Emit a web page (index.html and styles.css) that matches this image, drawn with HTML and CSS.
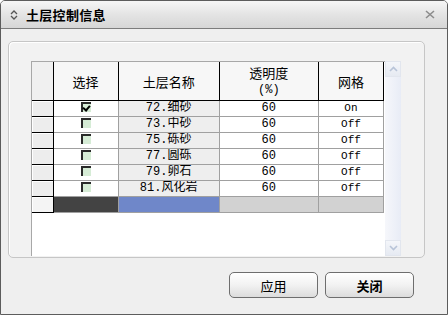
FILE: index.html
```html
<!DOCTYPE html>
<html>
<head>
<meta charset="utf-8">
<link rel="stylesheet" href="styles.css">
</head>
<body>
<div class="window">
  <div class="titlebar">
    <svg class="ticon" width="8" height="10" viewBox="0 0 8 10"><path d="M1 4 L4 1 L7 4 M1 6 L4 9 L7 6" fill="none" stroke="#555" stroke-width="1.3"/></svg>
    <span class="title">土层控制信息</span>
    <svg class="close" width="10" height="9" viewBox="0 0 10 9"><path d="M1 1 L9 8 M9 1 L1 8" stroke="#8c8c8c" stroke-width="1.6"/></svg>
  </div>
  <div class="content">
    <div class="group">
      <div class="gridwrap">
        <div class="gridarea">
          <table class="grid">
            <colgroup><col class="c0"><col class="c1"><col class="c2"><col class="c3"><col class="c4"></colgroup>
            <thead>
              <tr><th class="corner"></th><th>选择</th><th>土层名称</th><th>透明度<br><span class="pct">(%)</span></th><th>网格</th></tr>
            </thead>
            <tbody>
              <tr><td class="rh"></td><td class="cb"><span class="chk on"></span></td><td class="ro">72.细砂</td><td>60</td><td class="mono">On</td></tr>
              <tr><td class="rh"></td><td class="cb"><span class="chk"></span></td><td class="ro">73.中砂</td><td>60</td><td class="mono">Off</td></tr>
              <tr><td class="rh"></td><td class="cb"><span class="chk"></span></td><td class="ro">75.砾砂</td><td>60</td><td class="mono">Off</td></tr>
              <tr><td class="rh"></td><td class="cb"><span class="chk"></span></td><td class="ro">77.圆砾</td><td>60</td><td class="mono">Off</td></tr>
              <tr><td class="rh"></td><td class="cb"><span class="chk"></span></td><td class="ro">79.卵石</td><td>60</td><td class="mono">Off</td></tr>
              <tr><td class="rh"></td><td class="cb"><span class="chk"></span></td><td class="ro">81.风化岩</td><td>60</td><td class="mono">Off</td></tr>
              <tr class="newrow"><td class="rh"></td><td class="n1"></td><td class="n2"></td><td class="n3"></td><td class="n3"></td></tr>
            </tbody>
          </table>
        </div>
        <div class="scrollbar">
          <div class="sbtn"><svg width="9" height="6" viewBox="0 0 9 6"><path d="M1 5 L4.5 1.5 L8 5" fill="none" stroke="#b8c4d8" stroke-width="1.6"/></svg></div>
          <div class="strack"></div>
          <div class="sbtn"><svg width="9" height="6" viewBox="0 0 9 6"><path d="M1 1 L4.5 4.5 L8 1" fill="none" stroke="#b8c4d8" stroke-width="1.6"/></svg></div>
        </div>
      </div>
    </div>
    <div class="buttons">
      <button class="btn">应用</button>
      <button class="btn bold">关闭</button>
    </div>
  </div>
</div>
</body>
</html>
```
FILE: styles.css
```css
html, body {
  margin: 0;
  padding: 0;
  background: #ffffff;
}
body {
  font-family: "Noto Sans CJK SC", "Liberation Sans", sans-serif;
  color: #000;
}
.window {
  width: 448px;
  height: 315px;
  box-sizing: border-box;
  border: 1px solid #5c5c5c;
  border-radius: 5px 5px 0 0;
  background: #efefef;
  display: flex;
  flex-direction: column;
  overflow: hidden;
}
.titlebar {
  height: 27px;
  flex: none;
  border-bottom: 1px solid #7c7c7c;
  background: linear-gradient(#f6f6f6, #e4e4e4 50%, #d6d6d6);
  display: flex;
  align-items: center;
  padding-left: 9px;
  padding-right: 12px;
}
.ticon {
  margin-right: 8px;
}
.title {
  font-size: 13px;
  font-weight: bold;
  flex: 1;
  letter-spacing: 0.3px;
}
.content {
  flex: 1;
  display: flex;
  flex-direction: column;
  padding: 12px 0 0 7px;
}
.group {
  width: 417px;
  height: 217px;
  box-sizing: border-box;
  border: 1px solid #c6c6c6;
  border-radius: 5px;
  background: #f2f2f2;
  padding: 19px 22px 0 22px;
  box-shadow: inset 1px 1px 0 #ffffff;
}
.gridwrap {
  display: flex;
  height: 195px;
}
.gridarea {
  width: 354px;
  background: #ffffff;
  box-sizing: border-box;
  border-left: 1px solid #a8a8a8;
  border-top: 1px solid #a8a8a8;
}
.grid {
  border-collapse: collapse;
  table-layout: fixed;
  width: 352px;
  font-size: 12px;
}
.c0 { width: 21px; }
.c1 { width: 65px; }
.c2 { width: 101px; }
.c3 { width: 99px; }
.c4 { width: 65px; }
.grid th {
  height: 38px;
  padding: 0;
  font-weight: normal;
  font-size: 13px;
  line-height: 15px;
  background: #f7f7f7;
  border-right: 1px solid #000;
  border-bottom: 1px solid #000;
  text-align: center;
}
.grid th.corner {
  background: #f0f0f0;
}
.pct {
  font-family: "Liberation Mono", monospace;
  font-size: 12px;
}
.grid td {
  height: 15px;
  padding: 0;
  line-height: 15px;
  text-align: center;
  border-right: 1px solid #a0a0a0;
  border-bottom: 1px solid #a0a0a0;
  font-family: "Liberation Mono", "Noto Sans CJK SC", monospace;
  font-size: 12px;
  white-space: nowrap;
  overflow: hidden;
}
.grid td.rh {
  background: #ededed;
  border-right: 1px solid #000;
  border-bottom: 1px solid #000;
  box-shadow: inset 1px 1px 0 #ffffff;
}
.grid td.ro {
  background: #eeeeee;
}
.grid td.mono {
  font-size: 11px;
}
.cb {
  vertical-align: middle;
}
.chk {
  display: inline-block;
  width: 8px;
  height: 8px;
  vertical-align: middle;
  background: #d6ecd6;
  border-top: 2px solid #2a2a2a;
  border-left: 2px solid #2a2a2a;
  position: relative;
  top: -1px;
}
.chk.on::after {
  content: "";
  position: absolute;
  left: 1px;
  top: 0px;
  width: 3px;
  height: 5px;
  border-right: 2px solid #000;
  border-bottom: 2px solid #000;
  transform: rotate(40deg);
}
.newrow td {
  height: 15px;
}
.newrow td.rh {
  background: #f4f4f4;
}
.newrow td.n1 {
  background: #434343;
}
.newrow td.n2 {
  background: #6f87c9;
}
.newrow td.n3 {
  background: #d2d2d2;
}
.scrollbar {
  width: 16px;
  display: flex;
  flex-direction: column;
  background: linear-gradient(90deg, #f6f7fb, #e8ecf6);
}
.sbtn {
  height: 16px;
  display: flex;
  align-items: center;
  justify-content: center;
  background: linear-gradient(#f4f6fa, #e6eaf2);
  border: 1px solid #e2e6ee;
  box-sizing: border-box;
}
.strack {
  flex: 1;
}
.buttons {
  display: flex;
  justify-content: flex-end;
  gap: 7px;
  padding-right: 33px;
  margin-top: 14px;
}
.btn {
  width: 89px;
  height: 26px;
  border: 1px solid #6e6e6e;
  border-radius: 5px;
  background: linear-gradient(#ffffff, #f2f2f2 50%, #dcdcdc);
  font-family: "Noto Sans CJK SC", sans-serif;
  font-size: 13px;
  color: #000;
  padding: 0;
}
.btn.bold {
  font-weight: bold;
}
```
